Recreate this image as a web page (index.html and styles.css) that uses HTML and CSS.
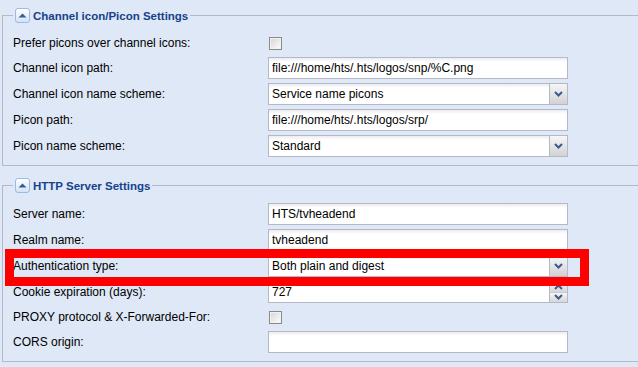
FILE: index.html
```html
<!DOCTYPE html>
<html lang="en">
<head>
    <meta charset="UTF-8">
    <meta name="viewport" content="width=device-width, initial-scale=1.0">
    <title>Configuration</title>
    <link rel="stylesheet" href="styles.css">
</head>
<body>
    <div class="panel">
        <fieldset class="group">
            <legend class="group-title">
                <span class="toggle"><svg width="9" height="5" viewBox="0 0 9 5"><path d="M0.5 4.5 L4.5 0.5 L8.5 4.5 Z" fill="#2f5da8"/></svg></span>
                Channel icon/Picon Settings
            </legend>
            <div class="row row-check">
                <span class="label">Prefer picons over channel icons:</span>
                <span class="check"></span>
            </div>
            <div class="row">
                <span class="label">Channel icon path:</span>
                <div class="field">file:///home/hts/.hts/logos/snp/%C.png</div>
            </div>
            <div class="row">
                <span class="label">Channel icon name scheme:</span>
                <div class="field combo">
                    <span class="value">Service name picons</span>
                    <span class="trigger"><svg width="9" height="6" viewBox="0 0 9 6"><path d="M1 1 L4.5 4.5 L8 1" fill="none" stroke="#3a5a92" stroke-width="2"/></svg></span>
                </div>
            </div>
            <div class="row">
                <span class="label">Picon path:</span>
                <div class="field">file:///home/hts/.hts/logos/srp/</div>
            </div>
            <div class="row">
                <span class="label">Picon name scheme:</span>
                <div class="field combo">
                    <span class="value">Standard</span>
                    <span class="trigger"><svg width="9" height="6" viewBox="0 0 9 6"><path d="M1 1 L4.5 4.5 L8 1" fill="none" stroke="#3a5a92" stroke-width="2"/></svg></span>
                </div>
            </div>
        </fieldset>

        <fieldset class="group">
            <legend class="group-title">
                <span class="toggle"><svg width="9" height="5" viewBox="0 0 9 5"><path d="M0.5 4.5 L4.5 0.5 L8.5 4.5 Z" fill="#2f5da8"/></svg></span>
                HTTP Server Settings
            </legend>
            <div class="row">
                <span class="label">Server name:</span>
                <div class="field">HTS/tvheadend</div>
            </div>
            <div class="row">
                <span class="label">Realm name:</span>
                <div class="field">tvheadend</div>
            </div>
            <div class="row highlighted">
                <span class="label">Authentication type:</span>
                <div class="field combo">
                    <span class="value">Both plain and digest</span>
                    <span class="trigger"><svg width="9" height="6" viewBox="0 0 9 6"><path d="M1 1 L4.5 4.5 L8 1" fill="none" stroke="#3a5a92" stroke-width="2"/></svg></span>
                </div>
                <div class="marker"></div>
            </div>
            <div class="row">
                <span class="label">Cookie expiration (days):</span>
                <div class="field combo">
                    <span class="value">727</span>
                    <span class="spinner">
                        <span class="spin"><svg width="9" height="6" viewBox="0 0 9 6"><path d="M1 5 L4.5 1.5 L8 5" fill="none" stroke="#3a5a92" stroke-width="2"/></svg></span>
                        <span class="spin"><svg width="9" height="6" viewBox="0 0 9 6"><path d="M1 1 L4.5 4.5 L8 1" fill="none" stroke="#3a5a92" stroke-width="2"/></svg></span>
                    </span>
                </div>
            </div>
            <div class="row row-check">
                <span class="label">PROXY protocol &amp; X-Forwarded-For:</span>
                <span class="check"></span>
            </div>
            <div class="row">
                <span class="label">CORS origin:</span>
                <div class="field"></div>
            </div>
        </fieldset>
    </div>
</body>
</html>
```

FILE: styles.css
```css
body {
    margin: 0;
    background: #dfe8f6;
    font-family: Tahoma, 'Liberation Sans', Arial, sans-serif;
    font-size: 12px;
    color: #000;
    overflow: hidden;
}
.panel {
    padding: 8px 0 0 2px;
}
.group {
    margin: 0 0 12px 0;
    padding: 10px 10px 8px 10px;
    border: 1px solid #b5b8c8;
    border-right: 0;
    min-width: 0;
}
.group-title {
    display: flex;
    align-items: center;
    gap: 3px;
    padding: 0 2px;
    margin-left: 0;
    height: 15px;
    font-weight: bold;
    font-size: 11.5px;
    color: #15428b;
}
.toggle {
    width: 13px;
    height: 13px;
    border: 1px solid #99bbe8;
    border-radius: 3px;
    background: linear-gradient(#ffffff, #d5e2f2);
    display: flex;
    align-items: center;
    justify-content: center;
}
.row {
    display: flex;
    align-items: center;
    height: 22px;
    margin-bottom: 4px;
}
.row:last-child {
    margin-bottom: 0;
}
.row-check {
    height: 20px;
}
.highlighted {
    position: relative;
}
.label {
    width: 255px;
    flex: none;
}
.field {
    box-sizing: border-box;
    width: 300px;
    height: 22px;
    border: 1px solid #b5b8c8;
    background: linear-gradient(#ececec, #ffffff 4px);
    padding: 0 3px;
    line-height: 20px;
    white-space: nowrap;
}
.combo {
    display: flex;
    padding-right: 0;
}
.value {
    flex: 1;
}
.trigger {
    width: 17px;
    border-left: 1px solid #b5b8c8;
    background: linear-gradient(#f6f6f6, #d2d2d2);
    display: flex;
    align-items: center;
    justify-content: center;
}
.spinner {
    width: 17px;
    border-left: 1px solid #b5b8c8;
    display: flex;
    flex-direction: column;
}
.spin {
    flex: 1;
    display: flex;
    align-items: center;
    justify-content: center;
    background: linear-gradient(#f6f6f6, #d6d6d6);
}
.spin + .spin {
    border-top: 1px solid #c8c8c8;
}
.check {
    box-sizing: border-box;
    width: 13px;
    height: 13px;
    margin-left: 1px;
    border: 1px solid #8a8a8a;
    background: linear-gradient(135deg, #d4d4d4, #ffffff);
    box-shadow: inset 0 0 0 1px #f2f2f2;
}
.marker {
    position: absolute;
    left: -8px;
    top: -6px;
    width: 584px;
    height: 37px;
    box-sizing: border-box;
    border: 9px solid #ff0000;
}
```
